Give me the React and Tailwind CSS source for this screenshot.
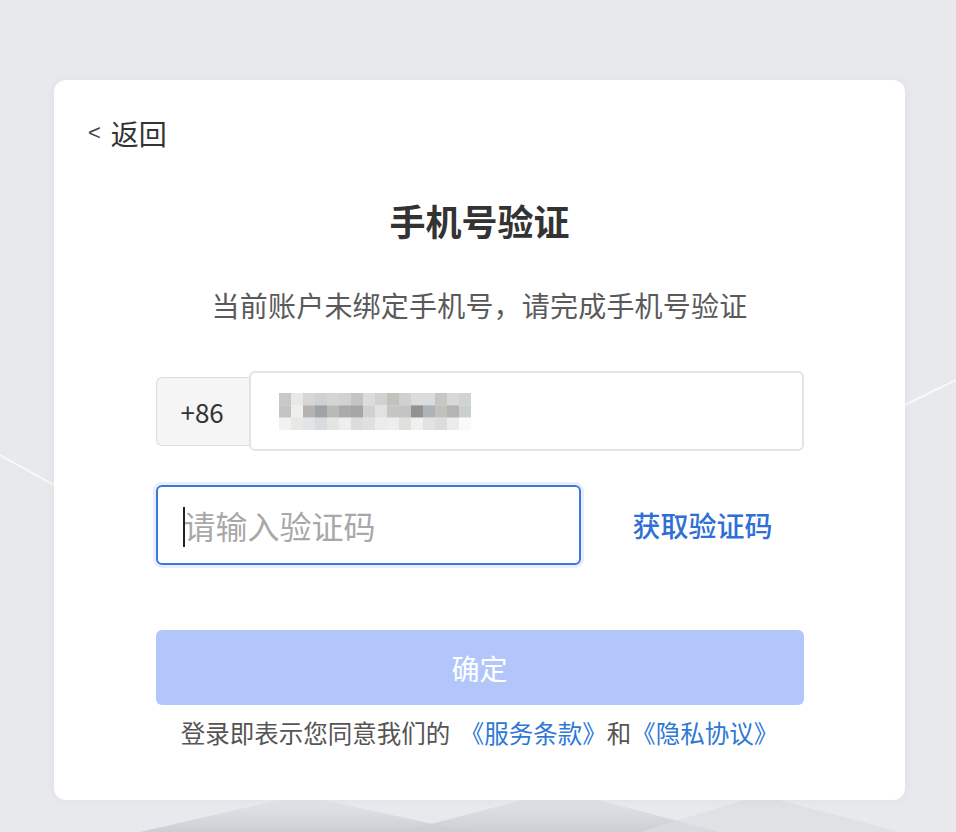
import { useState } from 'react';

const FONT = { fontFamily: '"Noto Sans CJK SC", "Noto Sans", sans-serif' };

// pixelated phone number mask, one row per array
const MASK = [
  ['#c8c8c8', '#e8e9e6', '#d6d6d8', '#d0d0d2', '#d4d6d2', '#d3d1d3', '#c4c4c4', '#dcdcdc', '#d2d0d2', '#c2c2bd', '#d0d0d0', '#dcdcdc', '#dcdcdc', '#c8c6c2', '#d8d8da', '#d2d2d2'],
  ['#c4c4c2', '#eef0ec', '#b4b3b0', '#9ea3a8', '#b8bab6', '#aaaaa8', '#a6a4a8', '#d0d2d0', '#e0e2e2', '#c6c6c4', '#c4c4c2', '#929292', '#adb3b6', '#c2c0bc', '#b4b4b4', '#cad0d2'],
  ['#f2f2f0', '#e8e8e6', '#e2e4e6', '#d8dcde', '#e4e4e4', '#eceef0', '#dcdcdc', '#e0e0e0', '#ececec', '#eeeeee', '#e0e0dc', '#f0f0f0', '#e2e2e2', '#dcdcdc', '#ececec', '#fafafa'],
];

function MaskedNumber() {
  return (
    <svg width="192" height="37" viewBox="0 0 192 37" className="block">
      {MASK.map((row, r) =>
        row.map((c, i) => (
          <rect key={`${r}-${i}`} x={i * 12} y={r * 12.3} width="12.2" height="12.5" fill={c} />
        ))
      )}
    </svg>
  );
}

function Backdrop() {
  return (
    <svg className="absolute inset-0 pointer-events-none" width="956" height="832" viewBox="0 0 956 832">
      <defs>
        <linearGradient id="fade" x1="0" y1="0" x2="0" y2="1">
          <stop offset="0" stopColor="#d6d8de" stopOpacity="0.2" />
          <stop offset="1" stopColor="#ccced5" stopOpacity="1" />
        </linearGradient>
      </defs>
      <polygon points="140,832 300,795 470,832" fill="url(#fade)" />
      <polygon points="400,832 560,790 720,832" fill="url(#fade)" />
      <polygon points="640,832 760,795 900,832" fill="#dcdee3" opacity="0.7" />
      <line x1="0" y1="455" x2="54" y2="485" stroke="#f7f8fa" strokeWidth="2" />
      <line x1="905" y1="405" x2="956" y2="380" stroke="#f7f8fa" strokeWidth="2" />
    </svg>
  );
}

export default function App() {
  const [code, setCode] = useState('');

  return (
    <div className="relative w-[956px] h-[832px] overflow-hidden bg-[#e8e9ec]" style={FONT}>
      <Backdrop />
      <div className="relative ml-[54px] mt-[80px] w-[851px] h-[720px] bg-white rounded-[12px] shadow-[0_0_12px_rgba(0,0,0,0.04)] pt-[38px] px-[34px]">
        {/* back link */}
        <button className="flex items-center h-[30px] text-[#333] cursor-pointer">
          <span className="text-[22px] leading-[30px] mr-[10px] text-[#444]" style={{ fontFamily: '"Liberation Sans", sans-serif' }}>&lt;</span>
          <span className="text-[28px] leading-[30px]">返回</span>
        </button>

        <h1 className="mt-[52px] text-center text-[36px] leading-[40px] font-bold text-[#333]">手机号验证</h1>
        <p className="mt-[48px] text-center text-[28px] leading-[34px] tracking-[0.2px] text-[#5a5a5a]">当前账户未绑定手机号，请完成手机号验证</p>

        <div className="mx-auto w-[648px]">
          {/* phone number */}
          <div className="mt-[49px] flex items-center h-[80px]">
            <div className="w-[95px] h-[69px] flex items-center pl-[24px] bg-[#f5f5f5] border border-[#dcdcdc] border-r-0 rounded-l-[6px] text-[26px] text-[#333]">
              +86
            </div>
            <div className="flex-1 h-[80px] -ml-[2px] flex items-center pl-[28px] bg-white border-2 border-[#e4e4e4] rounded-[6px]">
              <MaskedNumber />
            </div>
          </div>

          {/* sms code */}
          <div className="mt-[34px] flex items-center h-[80px]">
            <label className="relative w-[425px] h-[80px] flex items-center pl-[26px] border-2 border-[#3f77d9] rounded-[6px] shadow-[0_0_0_3px_rgba(99,140,230,0.15)] bg-white">
              <span className="absolute left-[25px] top-[20px] w-[2px] h-[40px] bg-[#222]" />
              <input
                value={code}
                onChange={(e) => setCode(e.target.value)}
                placeholder="请输入验证码"
                className="w-full bg-transparent outline-none text-[32px] text-[#333] placeholder:text-[#a8a8a8]"
              />
            </label>
            <button className="ml-[52px] text-[28px] font-medium text-[#2f6fd6]">获取验证码</button>
          </div>

          <button className="mt-[65px] w-full h-[75px] rounded-[6px] bg-[#b3c6fb] text-white text-[28px]">确定</button>

          <p className="mt-[13px] text-center text-[24.5px] leading-[30px] text-[#555]">
            登录即表示您同意我们的 <span className="ml-[4px] text-[#2e78d6]">《服务条款》</span>和<span className="text-[#2e78d6]">《隐私协议》</span>
          </p>
        </div>
      </div>
    </div>
  );
}
